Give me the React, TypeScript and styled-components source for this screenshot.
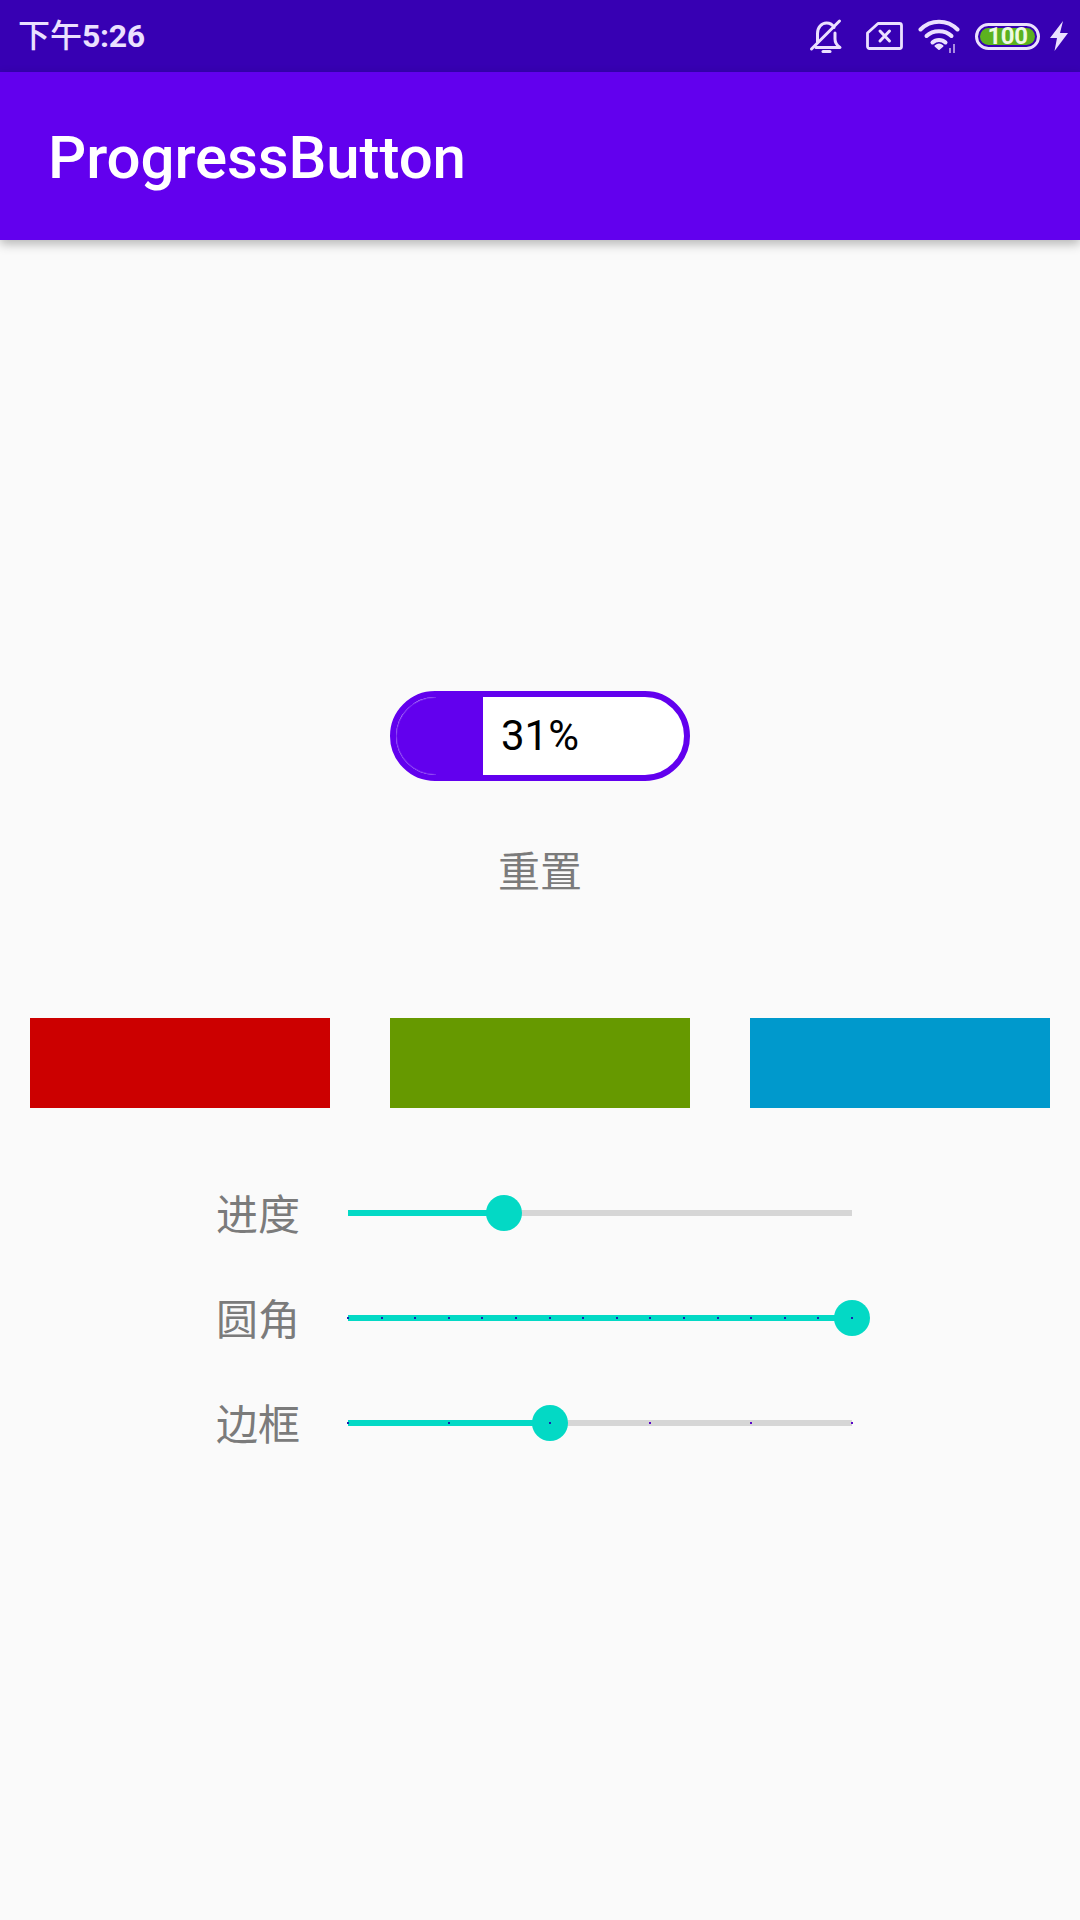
import React from "react";
import styled, { createGlobalStyle } from "styled-components";

const Global = createGlobalStyle`
  html, body { margin: 0; padding: 0; background: #fafafa; }
  #root { width: 1080px; height: 1920px; overflow: hidden; }
`;

const Page = styled.div`
  width: 1080px;
  height: 1920px;
  display: flex;
  flex-direction: column;
  background: #fafafa;
  font-family: Roboto, "Noto Sans CJK SC", sans-serif;
`;

const StatusBar = styled.div`
  height: 72px;
  flex: none;
  background: #3700b3;
  display: flex;
  align-items: center;
  justify-content: space-between;
  padding: 0 11px 0 18px;
  box-sizing: border-box;
  color: #ebe0ff;
`;

const Clock = styled.span`
  font-size: 32px;
  font-weight: 500;
  line-height: 72px;
`;

const ClockDigits = styled.span`
  font-weight: 700;
  letter-spacing: -0.3px;
`;

const StatusIcons = styled.div`
  display: flex;
  align-items: center;
`;

const StatusIcon = styled.svg<{ $gap?: number }>`
  display: block;
  flex: none;
  margin-left: ${(p) => p.$gap ?? 0}px;
`;

const Battery = styled.div`
  width: 65px;
  height: 27px;
  margin-left: 11px;
  box-sizing: border-box;
  border: 3px solid #ebe0ff;
  border-radius: 14px;
  padding: 2px;
  display: flex;
`;

const BatteryFill = styled.div`
  flex: 1;
  border-radius: 9px;
  background: #5cb21f;
  color: #eefae2;
  font-size: 24px;
  font-weight: 700;
  line-height: 17px;
  text-align: center;
  letter-spacing: -0.5px;
`;

const AppBar = styled.header`
  height: 168px;
  flex: none;
  background: #6200ee;
  box-shadow: 0 4px 10px rgba(0, 0, 0, 0.28);
  display: flex;
  align-items: center;
  padding: 4px 0 0 48px;
  box-sizing: border-box;
  position: relative;
`;

const Title = styled.h1`
  margin: 0;
  color: #fff;
  font-size: 60px;
  font-weight: 500;
  line-height: 70px;
  letter-spacing: -0.1px;
`;

const Main = styled.main`
  flex: 1;
  display: flex;
  flex-direction: column;
  align-items: center;
  padding-top: 451px;
`;

const ProgressButton = styled.div`
  width: 300px;
  height: 90px;
  box-sizing: border-box;
  border: 6px solid #6200ee;
  border-radius: 45px;
  background: #fff;
  overflow: hidden;
  display: flex;
  align-items: center;
`;

const ProgressFill = styled.div`
  width: 87px;
  align-self: stretch;
  flex: none;
  background: #6200ee;
  position: relative;

  &::before {
    content: "";
    position: absolute;
    inset: 0 auto 0 0;
    width: 39px;
    border: 1px solid rgba(255, 255, 255, 0.16);
    border-right: none;
    border-radius: 39px 0 0 39px;
  }
`;

const ProgressText = styled.span`
  margin-left: 18px;
  font-size: 42px;
  color: #000;
  line-height: 50px;
`;

const ResetLabel = styled.div`
  margin-top: 66px;
  font-size: 42px;
  line-height: 52px;
  color: #7b7b7b;
`;

const Swatches = styled.div`
  width: 100%;
  box-sizing: border-box;
  padding: 0 30px;
  margin-top: 119px;
  display: flex;
  justify-content: space-between;
`;

const Swatch = styled.div<{ $color: string }>`
  width: 300px;
  height: 90px;
  background: ${(p) => p.$color};
`;

const Controls = styled.div`
  margin-top: 81px;
  display: flex;
  flex-direction: column;
  gap: 57px;
  align-self: flex-start;
  margin-left: 216px;
`;

const ControlRow = styled.div`
  height: 48px;
  display: flex;
  align-items: center;
`;

const ControlLabel = styled.span`
  width: 132px;
  flex: none;
  font-size: 42px;
  line-height: 48px;
  color: #7b7b7b;
  position: relative;
  top: 3px;
`;

const Track = styled.div`
  width: 504px;
  height: 6px;
  background: #d6d6d6;
  position: relative;
`;

const TrackFill = styled.div`
  height: 100%;
  background: #03d9c5;
`;

const Ticks = styled.div`
  position: absolute;
  left: -1px;
  right: -1px;
  top: 2px;
  display: flex;
  justify-content: space-between;
  z-index: 2;
`;

const Tick = styled.i<{ $on: boolean }>`
  display: block;
  width: 2px;
  height: 2px;
  background: ${(p) => (p.$on ? "#1a22b0" : "#5a08c8")};
`;

const Thumb = styled.div`
  position: absolute;
  top: -15px;
  width: 36px;
  height: 36px;
  margin-left: -18px;
  border-radius: 50%;
  background: #03d9c5;
  z-index: 1;
`;

function Slider({ value, ticks }: { value: number; ticks: number }) {
  const count = ticks > 0 ? ticks + 1 : 0;
  return (
    <Track>
      <TrackFill style={{ width: `${value * 100}%` }} />
      <Thumb style={{ left: `${value * 100}%` }} />
      {count > 0 && (
        <Ticks>
          {Array.from({ length: count }, (_, i) => (
            <Tick key={i} $on={i / ticks <= value} />
          ))}
        </Ticks>
      )}
    </Track>
  );
}

export default function App() {
  return (
    <Page>
      <Global />
      <StatusBar>
        <Clock>
          下午<ClockDigits>5:26</ClockDigits>
        </Clock>
        <StatusIcons>
          <StatusIcon width="34" height="36" viewBox="0 0 34 36" fill="none" stroke="#ebe0ff" strokeWidth="3" strokeLinejoin="round" strokeLinecap="round">
            <path d="M8.500 24V15.500C8.500 9.500 12.500 5 17.500 5c3.500 0 6 1.500 7.500 4.500M26 15v6c0 3 2 6.500 5 8.500H7" />
            <path d="M2.500 31 30.500 3" />
            <path d="M14 33.500h7" />
          </StatusIcon>
          <StatusIcon $gap={23} width="37" height="30" viewBox="0 0 37 30" fill="none" stroke="#ebe0ff" strokeWidth="2.8" strokeLinejoin="round" strokeLinecap="round">
            <path d="M12 2.500h21.500a2 2 0 0 1 2 2v21a2 2 0 0 1-2 2H3.500a2 2 0 0 1-2-2V12z" />
            <path d="M14 10l9.500 10M23.500 10 14 20" strokeWidth="3" />
          </StatusIcon>
          <StatusIcon $gap={15} width="46" height="36" viewBox="0 0 46 36" fill="none" stroke="#ebe0ff" strokeWidth="4" strokeLinecap="round">
            <path d="M2.500 11.500C12.500 1 29.500 1 39.500 11.500" />
            <path d="M8.500 18C15 11.500 27 11.500 33.500 18" />
            <path d="M14.500 24.500c3.500-3.500 9.500-3.500 13 0" />
            <path d="M21 31 17.500 28c2-1.600 5-1.600 7 0z" fill="#ebe0ff" strokeWidth="2" strokeLinejoin="round" />
            <path d="M36 26v9M32 30v5" stroke="#a98be0" strokeWidth="2" strokeLinecap="butt" />
          </StatusIcon>
          <Battery>
            <BatteryFill>100</BatteryFill>
          </Battery>
          <StatusIcon $gap={9} width="20" height="32" viewBox="0 0 20 32" fill="#ebe0ff">
            <path d="M14 1 1 18h7L5.500 31 19 13h-8z" />
          </StatusIcon>
        </StatusIcons>
      </StatusBar>
      <AppBar>
        <Title>ProgressButton</Title>
      </AppBar>
      <Main>
        <ProgressButton>
          <ProgressFill />
          <ProgressText>31%</ProgressText>
        </ProgressButton>
        <ResetLabel>重置</ResetLabel>
        <Swatches>
          <Swatch $color="#cc0000" />
          <Swatch $color="#669900" />
          <Swatch $color="#0099cc" />
        </Swatches>
        <Controls>
          <ControlRow>
            <ControlLabel>进度</ControlLabel>
            <Slider value={0.31} ticks={0} />
          </ControlRow>
          <ControlRow>
            <ControlLabel>圆角</ControlLabel>
            <Slider value={1} ticks={15} />
          </ControlRow>
          <ControlRow>
            <ControlLabel>边框</ControlLabel>
            <Slider value={0.4} ticks={5} />
          </ControlRow>
        </Controls>
      </Main>
    </Page>
  );
}
